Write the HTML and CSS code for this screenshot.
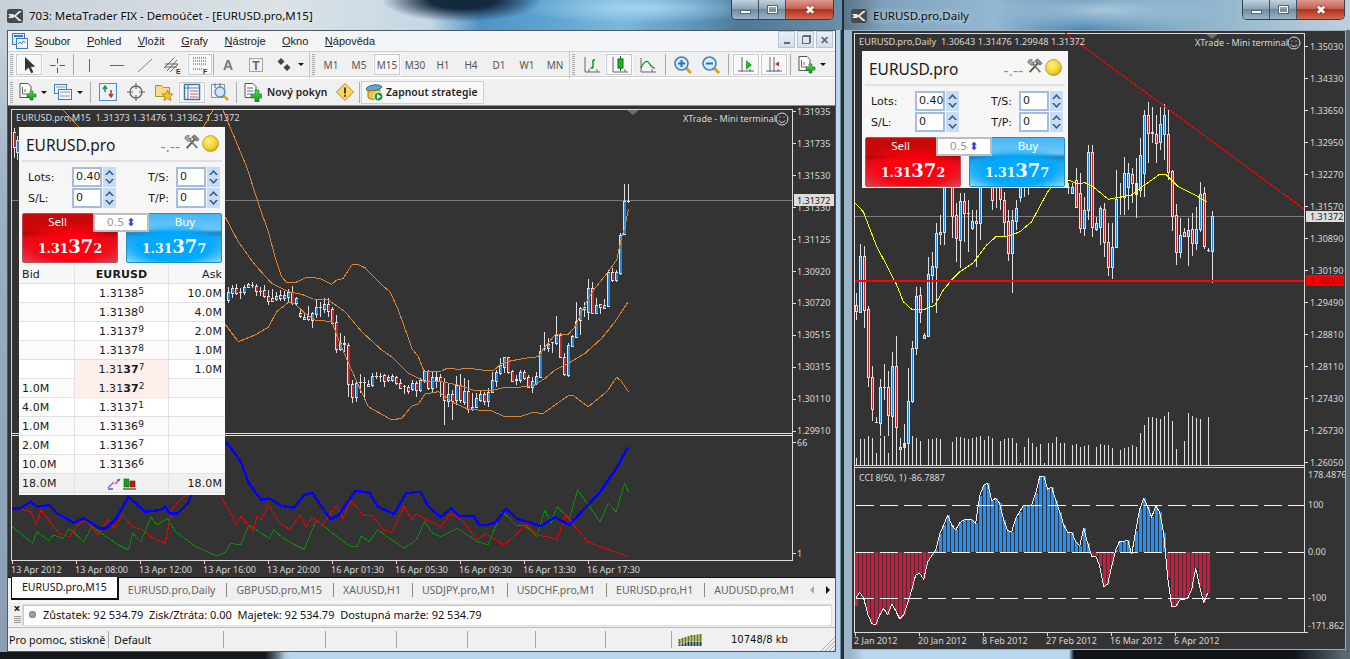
FILE: index.html
```html
<!DOCTYPE html>
<html lang="cs">
<head>
<meta charset="utf-8">
<title>MetaTrader FIX</title>
<link rel="stylesheet" href="styles.css">
</head>
<body>
<svg class="defs" width="0" height="0" aria-hidden="true">
  <defs>
    <linearGradient id="gplus" x1="0" y1="0" x2="0" y2="1"><stop offset="0" stop-color="#5fd35f"/><stop offset="1" stop-color="#0c9a1c"/></linearGradient>
    <radialGradient id="gcoin" cx=".4" cy=".35" r=".7"><stop offset="0" stop-color="#fff27a"/><stop offset=".7" stop-color="#f0cf2c"/><stop offset="1" stop-color="#c79a10"/></radialGradient>
    <symbol id="i-arrow" viewBox="0 0 20 20"><path d="M6 2v14l3.600-3.400 2.600 5.600 2.200-1-2.600-5.400h4.600z" fill="#333"/></symbol>
    <symbol id="i-cross" viewBox="0 0 20 20"><path d="M10.500 3v5.500M10.500 12.500v5.500M3 10.500h5.500M12.500 10.500h5.500" stroke="#555" fill="none"/></symbol>
    <symbol id="i-v" viewBox="0 0 20 20"><path d="M10.500 4v13" stroke="#666"/></symbol>
    <symbol id="i-h" viewBox="0 0 20 20"><path d="M3 10.500h14" stroke="#666"/></symbol>
    <symbol id="i-d" viewBox="0 0 20 20"><path d="M3 17L17 4" stroke="#888"/></symbol>
    <symbol id="i-chan" viewBox="0 0 20 20"><path d="M1 13L11 3M4 16L14 5M7 17L15 9M2 9h13M2 12h12" stroke="#555" fill="none" stroke-width=".9"/><text x="13" y="19" font-size="7" font-weight="700" fill="#333" font-family="Liberation Sans">E</text></symbol>
    <symbol id="i-fib" viewBox="0 0 20 20"><path d="M3 3h13M3 6h13M3 9h13M3 14h10" stroke="#444" stroke-dasharray="1 1" fill="none"/><text x="13" y="19" font-size="7" font-weight="700" fill="#333" font-family="Liberation Sans">F</text></symbol>
    <symbol id="i-tbox" viewBox="0 0 20 20"><rect x="3.500" y="3.500" width="13" height="13" fill="none" stroke="#555" stroke-dasharray="1 1"/><text x="6.300" y="15" font-size="12" font-weight="700" fill="#666" font-family="Liberation Sans">T</text></symbol>
    <symbol id="i-dia" viewBox="0 0 20 20"><path d="M7 3l3.500 3.500L7 10 3.500 6.500zM13 9l3.500 3.500L13 16l-3.500-3.500z" fill="#444"/></symbol>
    <symbol id="i-bar" viewBox="0 0 20 20"><path d="M4 2v15h15M16 14v3M8 14v3" stroke="#667" fill="none"/><path d="M12 5v8M9.500 13H12M12 5h2" stroke="#0a8a1a" fill="none" stroke-width="1.400"/></symbol>
    <symbol id="i-candle" viewBox="0 0 20 20"><path d="M4 2v15h15M16 14v3" stroke="#667" fill="none"/><path d="M11.500 1v15" stroke="#0a6a16"/><rect x="9" y="4" width="5" height="9" fill="#22b02c" stroke="#0a6a16"/></symbol>
    <symbol id="i-line" viewBox="0 0 20 20"><path d="M4 3v14h15M15 14v3" stroke="#667" fill="none"/><path d="M4 13C7 6 10 5 12 8s3 5 6 5" stroke="#0a8a1a" fill="none" stroke-width="1.200"/></symbol>
    <symbol id="i-zin" viewBox="0 0 20 20"><path d="M12 12l6 6" stroke="#d9a422" stroke-width="3"/><circle cx="8.500" cy="8.500" r="6.500" fill="#d8ebfb" stroke="#4a82b8" stroke-width="1.600"/><path d="M5 8.500h7M8.500 5v7" stroke="#2a70b0" stroke-width="2"/></symbol>
    <symbol id="i-zout" viewBox="0 0 20 20"><path d="M12 12l6 6" stroke="#d9a422" stroke-width="3"/><circle cx="8.500" cy="8.500" r="6.500" fill="#d8ebfb" stroke="#4a82b8" stroke-width="1.600"/><path d="M5 8.500h7" stroke="#2a70b0" stroke-width="2"/></symbol>
    <symbol id="i-auto" viewBox="0 0 20 20"><path d="M6 2v15M2 16h16M14 14v3" stroke="#667" fill="none"/><path d="M10 5l6 5-6 5z" fill="#25b030"/></symbol>
    <symbol id="i-shift" viewBox="0 0 20 20"><path d="M6 2v15M2 16h16M14 14v3M10 2v15" stroke="#667" fill="none"/><path d="M11 9l4-2.500v5z" fill="#c03020"/></symbol>
    <symbol id="i-newch" viewBox="0 0 20 20"><path d="M3 1.500h8l3 3v11H3z" fill="#fff" stroke="#555"/><path d="M5.500 5v7h6M8 7v3" stroke="#666" fill="none"/><path d="M10 12h3V9h3v3h3v3h-3v3h-3v-3h-3z" fill="url(#gplus)" stroke="#0c7a18" stroke-width=".6"/></symbol>
    <symbol id="i-prof" viewBox="0 0 20 20"><rect x="1.500" y="2.500" width="12" height="9" fill="#eef5fc" stroke="#4a7ca8"/><rect x="5.500" y="7.500" width="13" height="10" fill="#eef5fc" stroke="#4a7ca8"/><path d="M3 5h9M7 10h10M7 14h10" stroke="#7a9cc0"/></symbol>
    <symbol id="i-mw" viewBox="0 0 20 20"><rect x="1.500" y="1.500" width="17" height="17" fill="#e6f1fb" stroke="#4a90c8"/><path d="M7 10V5M5 7l2-3 2 3" stroke="#1a9a2a" fill="none" stroke-width="1.500"/><path d="M13 8v6M11 12l2 3 2-3" stroke="#d03020" fill="none" stroke-width="1.500"/></symbol>
    <symbol id="i-target" viewBox="0 0 20 20"><circle cx="10" cy="10" r="6" fill="none" stroke="#666" stroke-width="1.400"/><path d="M10 1v6M10 13v6M1 10h6M13 10h6" stroke="#666" stroke-width="1.200"/></symbol>
    <symbol id="i-fold" viewBox="0 0 20 20"><path d="M1.500 3.500h6l2 2h6v9h-14z" fill="#f6dc8a" stroke="#b39030"/><path d="M13.500 8l1.700 3.600 3.800.5-2.800 2.600.8 3.800-3.500-1.900-3.500 1.900.8-3.800L8 12.100l3.800-.5z" fill="#f0c030" stroke="#a07a10" stroke-width=".7"/></symbol>
    <symbol id="i-nav" viewBox="0 0 20 20"><rect x="2.500" y="2.500" width="15" height="15" fill="#fff" stroke="#3a78b8" stroke-width="1.500"/><path d="M2.500 6h15M6 2.500v15" stroke="#3a78b8"/><path d="M8 9h8M8 12h8M8 15h8" stroke="#d05050"/></symbol>
    <symbol id="i-test" viewBox="0 0 20 20"><rect x="1.500" y="2.500" width="13" height="13" fill="#eef3f7" stroke="#8a9aa8"/><path d="M5 1v5M10 1v5" stroke="#667"/><path d="M13 13l5 5" stroke="#d9a422" stroke-width="2.500"/><circle cx="10" cy="10" r="5" fill="#cfe4f5" stroke="#5a8fc0" stroke-width="1.400"/></symbol>
    <symbol id="i-order" viewBox="0 0 20 20"><path d="M3 1.500h8l3 3v11H3z" fill="#fff" stroke="#555"/><path d="M5 6h6M5 9h6M5 12h4" stroke="#667"/><path d="M9 12h4V8h4v4h3v4h-3v4h-4v-4H9z" fill="url(#gplus)" stroke="#0c7a18" stroke-width=".6"/></symbol>
    <symbol id="i-alert" viewBox="0 0 20 20"><path d="M10 1.500L18.500 10 10 18.500 1.500 10z" fill="#f8d860" stroke="#b08a20"/><rect x="9" y="5.500" width="2" height="6" fill="#5a4008"/><rect x="9" y="12.800" width="2" height="2" fill="#5a4008"/></symbol>
    <symbol id="i-strat" viewBox="0 0 20 20"><path d="M2 7c1-4 14-6 16-2-1 3-15 6-16 2z" fill="#5aa8d8" stroke="#2a6a9a"/><path d="M4 9v6c0 3 12 3 12 0V8z" fill="#f0c830" stroke="#9a7a10"/><circle cx="14.500" cy="14.500" r="4.500" fill="#1a9a3a" stroke="#fff"/><path d="M13 12l4 2.500-4 2.500z" fill="#fff"/></symbol>
    <symbol id="i-app" viewBox="0 0 16 16"><rect x=".5" y=".5" width="12" height="11" fill="#dcecfa" stroke="#3a78c0"/><rect x="4.500" y="5.500" width="11" height="10" fill="#eef6fd" stroke="#3a78c0"/><path d="M2 3h9" stroke="#3a78c0" stroke-width="2"/><path d="M6 11l2-2 1.500 2 2-3 2 2" stroke="#3a78c0" fill="none"/></symbol>
    <symbol id="i-logo" viewBox="0 0 16 14"><rect width="16" height="14" rx="2.500" fill="#4a4a4a"/><path d="M1 5h5l2 2-2 2H1l2-2zM15 2l-6 5 6 5h-3L6.500 7 12 2z" fill="#e8e8e8"/></symbol>
    <symbol id="i-tools" viewBox="0 0 18 18"><path d="M3 16L13 5" stroke="#6a5030" stroke-width="2"/><path d="M9 3l3-2 5 5-2 2-2-1-2-1z" fill="#888" stroke="#333" stroke-width=".6"/><path d="M15 16L5 5" stroke="#777" stroke-width="2"/><path d="M1 5c0-3 3-4 5-3L4.500 4 6 5.500 8 4c.5 2-1 5-4 4z" fill="#aaa" stroke="#333" stroke-width=".6"/></symbol>
    <symbol id="i-coin" viewBox="0 0 16 16"><circle cx="8" cy="8" r="7.500" fill="url(#gcoin)" stroke="#b89018" stroke-width=".7"/></symbol>
    <symbol id="i-spin" viewBox="0 0 13 20"><rect width="13" height="20" fill="#c9dcf0"/><path d="M2 8l4.500-5L11 8H9L6.500 5.300 4 8zM2 12l4.500 5L11 12H9l-2.500 2.700L4 12z" fill="#2f5a94"/></symbol>
    <symbol id="i-smile" viewBox="0 0 14 14"><circle cx="7" cy="7" r="6" fill="none" stroke="#ddd"/><path d="M4.500 5h1M8.500 5h1" stroke="#ddd" stroke-width="1.200"/><path d="M3.800 8.500c1.500 2.500 5 2.500 6.400 0" stroke="#ddd" fill="none"/></symbol>
  </defs>
</svg>

<main class="desktop">
  <section class="win win-main">
    <header class="titlebar">
      <svg class="logo"><use href="#i-logo"/></svg>
      <span class="wintitle">703: MetaTrader FIX - Demoúčet - [EURUSD.pro,M15]</span>
      <div class="capbtns">
        <span class="cap cap-min"><i class="g-min"></i></span>
        <span class="cap cap-max"><i class="g-max"></i></span>
        <span class="cap cap-close">✖</span>
      </div>
    </header>
    <div class="client">
      <nav class="menubar">
        <svg class="appicon"><use href="#i-app"/></svg>
        <span class="mi"><u>S</u>oubor</span>
        <span class="mi"><u>P</u>ohled</span>
        <span class="mi"><u>V</u>ložit</span>
        <span class="mi"><u>G</u>rafy</span>
        <span class="mi"><u>N</u>ástroje</span>
        <span class="mi"><u>O</u>kno</span>
        <span class="mi"><u>N</u>ápověda</span>
        <div class="mdi">
          <span class="mdib"><i class="m-min"></i></span>
          <span class="mdib"><i class="m-rest"></i></span>
          <span class="mdib mdix">✕</span>
        </div>
      </nav>

      <div class="toolrow">
        <i class="grip"></i>
        <span class="tb on"><svg class="ic"><use href="#i-arrow"/></svg></span>
        <span class="tb"><svg class="ic"><use href="#i-cross"/></svg></span>
        <i class="sep"></i>
        <span class="tb"><svg class="ic"><use href="#i-v"/></svg></span>
        <span class="tb"><svg class="ic"><use href="#i-h"/></svg></span>
        <span class="tb"><svg class="ic"><use href="#i-d"/></svg></span>
        <span class="tb"><svg class="ic"><use href="#i-chan"/></svg></span>
        <span class="tb tb26 on"><svg class="ic"><use href="#i-fib"/></svg></span>
        <i class="sep sep2"></i>
        <span class="tb tbA">A</span>
        <span class="tb"><svg class="ic"><use href="#i-tbox"/></svg></span>
        <span class="tb tb37"><svg class="ic"><use href="#i-dia"/></svg><i class="drop"></i></span>
        <i class="tend"></i>
        <i class="grip"></i>
        <span class="tb tf">M1</span><span class="tb tf">M5</span><span class="tb tf on">M15</span><span class="tb tf">M30</span><span class="tb tf">H1</span><span class="tb tf">H4</span><span class="tb tf">D1</span><span class="tb tf">W1</span><span class="tb tf">MN</span>
        <i class="tend tend1"></i>
        <i class="grip"></i>
        <span class="tb"><svg class="ic"><use href="#i-bar"/></svg></span>
        <span class="tb on"><svg class="ic"><use href="#i-candle"/></svg></span>
        <span class="tb"><svg class="ic"><use href="#i-line"/></svg></span>
        <i class="sep sep8"></i>
        <span class="tb"><svg class="ic"><use href="#i-zin"/></svg></span>
        <span class="tb"><svg class="ic"><use href="#i-zout"/></svg></span>
        <i class="sep sep7"></i>
        <span class="tb on"><svg class="ic"><use href="#i-auto"/></svg></span>
        <span class="tb on"><svg class="ic"><use href="#i-shift"/></svg></span>
        <i class="sep"></i>
        <span class="tb tb37"><svg class="ic"><use href="#i-newch"/></svg><i class="drop"></i></span>
      </div>

      <div class="toolrow toolrow2">
        <i class="grip"></i>
        <span class="tb tb35"><svg class="ic"><use href="#i-newch"/></svg><i class="drop"></i></span>
        <span class="tb tb37 tbp"><svg class="ic"><use href="#i-prof"/></svg><i class="drop"></i></span>
        <i class="sep sep7"></i>
        <span class="tb"><svg class="ic"><use href="#i-mw"/></svg></span>
        <span class="tb"><svg class="ic"><use href="#i-target"/></svg></span>
        <span class="tb"><svg class="ic"><use href="#i-fold"/></svg></span>
        <span class="tb on"><svg class="ic"><use href="#i-nav"/></svg></span>
        <span class="tb"><svg class="ic"><use href="#i-test"/></svg></span>
        <i class="sep"></i>
        <span class="tb tbtext order"><svg class="ic"><use href="#i-order"/></svg><b>Nový pokyn</b></span>
        <span class="tb tb25"><svg class="ic"><use href="#i-alert"/></svg></span>
        <i class="sep"></i>
        <span class="tb tbtext strat"><svg class="ic"><use href="#i-strat"/></svg><b>Zapnout strategie</b></span>
      </div>

      <div class="chartarea">
        <svg class="chart" viewBox="8 106 827 471" width="827" height="471">
          <defs>
            <clipPath id="clipTop"><rect x="12" y="110" width="780" height="323"/></clipPath>
            <clipPath id="clipSub"><rect x="12" y="436" width="780" height="124"/></clipPath>
          </defs>
          <g class="frame">
            <path d="M11.500 109.500H792.500V560.500H11.500ZM11.500 433.500H792.500M11.500 435.500H792.500"/>
            <path d="M793 111.500h3M793 143.500h3M793 175.500h3M793 207.500h3M793 239.500h3M793 271.500h3M793 303.500h3M793 335.500h3M793 367.500h3M793 399.500h3M793 431.500h3M793 442.500h3M793 553.500h3"/>
            <path d="M12.500 561v3M76.500 561v3M140.500 561v3M204.500 561v3M268.500 561v3M332.500 561v3M396.500 561v3M460.500 561v3M524.500 561v3M588.500 561v3"/>
          </g>
          <path class="curline" d="M12 200.500H792"/>
          <g id="mainChart" clip-path="url(#clipTop)"></g>
          <g id="subChart" clip-path="url(#clipSub)"></g>
          <path class="mark" d="M627 110h12l-6 5z"/>
          <text class="ct ctw" x="16" y="121" xml:space="preserve">EURUSD.pro,M15  1.31373 1.31476 1.31362 1.31372</text>
          <text class="ct" x="683" y="122">XTrade - Mini terminal</text>
          <use href="#i-smile" x="775" y="112" width="14" height="14"/>
          <g class="ct">
            <text x="797" y="114.500">1.31935</text><text x="797" y="146.500">1.31735</text><text x="797" y="178.500">1.31530</text><text x="797" y="210.500">1.31330</text><text x="797" y="242.500">1.31125</text><text x="797" y="274.500">1.30920</text><text x="797" y="305.500">1.30720</text><text x="797" y="337.500">1.30515</text><text x="797" y="369.500">1.30315</text><text x="797" y="401.500">1.30110</text><text x="797" y="433.500">1.29910</text><text x="797" y="445.500">66</text><text x="797" y="556.500">1</text>
            <text x="11" y="573">13 Apr 2012</text><text x="75" y="573">13 Apr 08:00</text><text x="139" y="573">13 Apr 12:00</text><text x="203" y="573">13 Apr 16:00</text><text x="267" y="573">13 Apr 20:00</text><text x="331" y="573">16 Apr 01:30</text><text x="395" y="573">16 Apr 05:30</text><text x="459" y="573">16 Apr 09:30</text><text x="523" y="573">16 Apr 13:30</text><text x="587" y="573">16 Apr 17:30</text>
          </g>
          <rect class="pbox" x="794" y="194" width="40" height="12"/>
          <text class="ctd" x="797" y="203.500">1.31372</text>
        </svg>

        <aside class="term term-main">
          <div class="term-head"><span class="sym">EURUSD.pro</span><span class="spread">-.--</span><svg class="tools"><use href="#i-tools"/></svg><svg class="coin"><use href="#i-coin"/></svg></div>
          <div class="term-form">
            <label>Lots:</label><span class="inp">0.40</span><svg class="spin"><use href="#i-spin"/></svg>
            <label class="r">T/S:</label><span class="inp">0</span><svg class="spin"><use href="#i-spin"/></svg>
            <label>S/L:</label><span class="inp">0</span><svg class="spin"><use href="#i-spin"/></svg>
            <label class="r">T/P:</label><span class="inp">0</span><svg class="spin"><use href="#i-spin"/></svg>
          </div>
          <div class="trade">
            <div class="tbtn sell"><span class="tl">Sell</span><span class="px">1.31<em>37</em>2</span></div>
            <div class="tbtn buy"><span class="tl">Buy</span><span class="px">1.31<em>37</em>7</span></div>
            <div class="size">0.5<i class="updn">⬍</i></div>
          </div>
          <div class="dom">
            <div class="row hd"><span>Bid</span><span class="c"><b>EURUSD</b></span><span class="a">Ask</span></div>
            <div class="row"><span></span><span class="c">1.3138<sup>5</sup></span><span class="a">10.0M</span></div>
            <div class="row alt"><span></span><span class="c">1.3138<sup>0</sup></span><span class="a">4.0M</span></div>
            <div class="row"><span></span><span class="c">1.3137<sup>9</sup></span><span class="a">2.0M</span></div>
            <div class="row alt"><span></span><span class="c">1.3137<sup>8</sup></span><span class="a">1.0M</span></div>
            <div class="row"><span></span><span class="c hot">1.31<b>37</b><sup>7</sup></span><span class="a">1.0M</span></div>
            <div class="row alt"><span>1.0M</span><span class="c hot">1.31<b>37</b><sup>2</sup></span><span class="a"></span></div>
            <div class="row"><span>4.0M</span><span class="c">1.3137<sup>1</sup></span><span class="a"></span></div>
            <div class="row alt"><span>1.0M</span><span class="c">1.3136<sup>9</sup></span><span class="a"></span></div>
            <div class="row"><span>2.0M</span><span class="c">1.3136<sup>7</sup></span><span class="a"></span></div>
            <div class="row alt"><span>10.0M</span><span class="c">1.3136<sup>6</sup></span><span class="a"></span></div>
            <div class="row foot"><span>18.0M</span><span class="c ficons"><svg width="14" height="12" viewBox="0 0 14 12"><path d="M1 10L7 4M8 6l5-5" stroke="#d04aa0" fill="none" stroke-width="1.400"/><path d="M1 11h5M10 2l3 0" stroke="#3a6ad0" stroke-width="1.400"/></svg><svg width="14" height="12" viewBox="0 0 14 12"><rect x="1" y="1" width="5" height="8" fill="#12a022" stroke="#0a6a14" stroke-width=".6"/><rect x="7" y="3" width="5" height="6" fill="#c01818" stroke="#801010" stroke-width=".6"/><path d="M0 11h13" stroke="#555" stroke-width="1.400"/></svg></span><span class="a">18.0M</span></div>
          </div>
        </aside>
      </div>

      <div class="tabs">
        <span class="tab active">EURUSD.pro,M15</span>
        <span class="tab first">EURUSD.pro,Daily</span>
        <span class="tab">GBPUSD.pro,M15</span>
        <span class="tab">XAUUSD,H1</span>
        <span class="tab">USDJPY.pro,M1</span>
        <span class="tab">USDCHF.pro,M1</span>
        <span class="tab">EURUSD.pro,H1</span>
        <span class="tab last">AUDUSD.pro,M1</span>
        <span class="tabnav"><i class="al"></i><i class="ar"></i></span>
      </div>

      <div class="info">
        <div class="infoside"><b>×</b><i></i></div>
        <div class="infofield"><i class="dot"></i><span>Zůstatek: 92 534.79&nbsp; Zisk/Ztráta: 0.00&nbsp; Majetek: 92 534.79&nbsp; Dostupná marže: 92 534.79</span></div>
      </div>

      <footer class="status">
        <span class="cell c1">Pro pomoc, stiskně</span>
        <span class="cell c2">Default</span>
        <span class="cell c3"></span>
        <span class="cell c4"></span>
        <span class="cell c4"></span>
        <span class="cell c5"></span>
        <span class="cell c6"></span>
        <span class="cell c9"></span>
        <span class="cell c7"><svg width="24" height="13" viewBox="0 0 24 13"><path d="M1.500 11V6M4.500 10V5M7.500 9V4M10.500 8V3M13.500 8V2M16.500 8V2M19.500 8V1.500M22.500 8V1" stroke="#6a7a08" stroke-width="2" fill="none"/><path d="M1.500 13V11.500M4.500 13V10.500M7.500 13V9.500M10.500 13V8.500M13.500 13V8.500M16.500 13V8.500M19.500 13V8.500M22.500 13V8.500" stroke="#103a58" stroke-width="2" fill="none"/></svg></span>
        <span class="cell c8">10748/8 kb</span>
        <svg class="sgrip" width="15" height="15" viewBox="0 0 15 15"><path d="M15 1L1 15M15 5L5 15M15 9L9 15M15 13L13 15" stroke="#aaa" fill="none"/></svg>
      </footer>
    </div>
  </section>

  <section class="win win-daily">
    <header class="titlebar">
      <svg class="logo"><use href="#i-logo"/></svg>
      <span class="wintitle">EURUSD.pro,Daily</span>
      <div class="capbtns">
        <span class="cap cap-min"><i class="g-min"></i></span>
        <span class="cap cap-max"><i class="g-max"></i></span>
        <span class="cap cap-close">✖</span>
      </div>
    </header>
    <div class="client client-dark">
      <svg class="chart" viewBox="852 31 493 618" width="493" height="618">
        <defs>
          <clipPath id="clipD"><rect x="855" y="34" width="449" height="431"/></clipPath>
          <clipPath id="clipC"><rect x="855" y="468" width="449" height="164"/></clipPath>
        </defs>
        <g class="frame">
          <path d="M854.500 33.500H1304.500V632.500H854.500ZM854.500 465.500H1304.500M854.500 467.500H1304.500"/>
          <path d="M1305 46.500h3M1305 78.500h3M1305 110.500h3M1305 142.500h3M1305 174.500h3M1305 206.500h3M1305 238.500h3M1305 270.500h3M1305 302.500h3M1305 334.500h3M1305 366.500h3M1305 398.500h3M1305 430.500h3M1305 462.500h3M1305 632.500h3"/>
          <path d="M855.500 633v3M919.500 633v3M983.500 633v3M1047.500 633v3M1111.500 633v3M1175.500 633v3"/>
        </g>
        <path class="curline" d="M855 216.500H1304"/>
        <g id="dayChart" clip-path="url(#clipD)"></g>
        <path class="trend" d="M1065 33L1304 209"/>
        <path class="level" d="M855 280.500H1304"/>
        <g id="cciChart" clip-path="url(#clipC)"></g>
        <path class="mark" d="M1206 34h12l-6 5z"/>
        <text class="ct ctw" x="859" y="45" xml:space="preserve">EURUSD.pro,Daily  1.30643 1.31476 1.29948 1.31372</text>
        <text class="ct" x="1195" y="46">XTrade - Mini terminal</text>
        <use href="#i-smile" x="1287" y="36" width="14" height="14"/>
        <text class="ct" x="859" y="481">CCI 8(50, 1) -86.7887</text>
        <g class="ct">
          <text x="1310" y="50">1.35030</text><text x="1310" y="82">1.34330</text><text x="1310" y="114">1.33650</text><text x="1310" y="146">1.32950</text><text x="1310" y="178">1.32270</text><text x="1310" y="210">1.31570</text><text x="1310" y="242">1.30890</text><text x="1310" y="274">1.30190</text><text x="1310" y="306">1.29490</text><text x="1310" y="338">1.28810</text><text x="1310" y="370">1.28110</text><text x="1310" y="402">1.27430</text><text x="1310" y="434">1.26730</text><text x="1310" y="466">1.26050</text>
          <text x="1308" y="478">178.4876</text><text x="1308" y="508">100</text><text x="1308" y="555">0.00</text><text x="1308" y="601">-100</text><text x="1308" y="629">-171.862</text>
          <text x="854" y="644">2 Jan 2012</text><text x="918" y="644">20 Jan 2012</text><text x="982" y="644">8 Feb 2012</text><text x="1046" y="644">27 Feb 2012</text><text x="1110" y="644">16 Mar 2012</text><text x="1174" y="644">6 Apr 2012</text>
        </g>
        <rect class="pbox" x="1306" y="211" width="38" height="11"/>
        <text class="ctd" x="1310" y="219.500">1.31372</text>
        <rect class="rbox" x="1306" y="275" width="38" height="11"/>
        <text class="ctr" x="1310" y="283.500">1.30000</text>
      </svg>

      <aside class="term term-daily">
        <div class="term-head"><span class="sym">EURUSD.pro</span><span class="spread">-.--</span><svg class="tools"><use href="#i-tools"/></svg><svg class="coin"><use href="#i-coin"/></svg></div>
        <div class="term-form">
          <label>Lots:</label><span class="inp">0.40</span><svg class="spin"><use href="#i-spin"/></svg>
          <label class="r">T/S:</label><span class="inp">0</span><svg class="spin"><use href="#i-spin"/></svg>
          <label>S/L:</label><span class="inp">0</span><svg class="spin"><use href="#i-spin"/></svg>
          <label class="r">T/P:</label><span class="inp">0</span><svg class="spin"><use href="#i-spin"/></svg>
        </div>
        <div class="trade">
          <div class="tbtn sell"><span class="tl">Sell</span><span class="px">1.31<em>37</em>2</span></div>
          <div class="tbtn buy"><span class="tl">Buy</span><span class="px">1.31<em>37</em>7</span></div>
          <div class="size">0.5<i class="updn">⬍</i></div>
        </div>
      </aside>
    </div>
  </section>
</main>
<script src="chart.js"></script>
</body>
</html>
```

FILE: styles.css
```css
* { box-sizing: border-box; }
html, body { margin: 0; height: 100%; overflow: hidden; }
body { background: #1c2c3c; font-family: "Noto Sans", "Liberation Sans", sans-serif; color: #111; }
.defs { position: absolute; }
.desktop { position: relative; width: 1350px; height: 659px; overflow: hidden; }

/* windows on the desktop */
.win { position: absolute; top: 0; height: 659px; display: flex; flex-direction: column; }
.win-main {
  left: 0; width: 843px;
  background:
    linear-gradient(90deg, #161a1e 0 265px, transparent 285px) 0 100% / 100% 7px no-repeat,
    linear-gradient(90deg, transparent 0 270px, #b8d6ee 290px 840px, #26343f 841px),
    linear-gradient(#d0d8de 0, #9ab0c4 30%, #8a9eb2 100%);
  border-right: 1px solid #20303c;
}
.win-main .titlebar {
  background:
    radial-gradient(ellipse 80px 22px at 462px 0, #14283e 0 40%, transparent 100%),
    radial-gradient(ellipse 120px 16px at 640px 8px, #a5d4ee 0, transparent 100%),
    linear-gradient(90deg, #c7d0d6 0, #dbe2e6 280px, #c3d7e5 430px, #4f93c6 480px, #62a6d4 560px, #79b8dc 620px, #5b93b8 700px, #4c7a98 740px, #6b8ea8 843px);
}
.win-daily {
  left: 844px; width: 506px;
  background:
    linear-gradient(90deg, #9cb4c8 0 6px, #b8d6ee 20px 225px, #101418 230px 450px, #5a6670 500px);
}
.win-daily .titlebar {
  background:
    radial-gradient(ellipse 120px 20px at 260px 10px, #a8c8da 0, transparent 100%),
    linear-gradient(90deg, #5a7488 0, #7ea2bc 40px, #93b8d2 150px, #4f87b2 240px, #84aec8 330px, #bccfdc 500px);
}
.titlebar { height: 30px; flex: none; position: relative; display: flex; align-items: flex-start; }
.logo { width: 16px; height: 14px; margin: 9px 6px 0 7px; flex: none; }
.wintitle { font-size: 11.500px; line-height: 16px; margin-top: 8px; color: #0c0c0c; white-space: nowrap; text-shadow: 0 0 6px #fff; }
.capbtns { position: absolute; top: 0; right: 8px; display: flex; height: 20px; border: 1px solid #30404e; border-top: 0; border-radius: 0 0 5px 5px; overflow: hidden; }
.win-daily .capbtns { right: 5px; }
.cap { display: flex; align-items: center; justify-content: center; height: 19px; width: 27px; background: linear-gradient(#c2d2de, #8ea6b8 45%, #6f8a9e 50%, #9cb4c6); border-right: 1px solid #405060; }
.cap-close { width: 47px; border-right: 0; background: linear-gradient(#dc9a90, #c8604f 45%, #b63020 50%, #cf6a50); color: #fff; font-size: 12px; line-height: 1; text-shadow: 0 0 2px #400; }
.g-min { width: 11px; height: 4px; background: #fff; border: 1px solid #56697a; margin-top: 5px; }
.g-max { width: 11px; height: 9px; border: 2px solid #fff; outline: 1px solid #56697a; outline-offset: -1px; }

.client { width: 829px; margin-left: 7px; height: 622px; background: #f0f0f0; border: 1px solid #4d5a64; display: flex; flex-direction: column; }
.client-dark { position: relative; width: 495px; height: 620px; background: #333; border-color: #9fb2c0; }

/* menu */
.menubar { height: 21px; flex: none; display: flex; align-items: center; background: #f4f5f6; position: relative; border-bottom: 1px solid #cfcfcf; padding-left: 4px; }
.appicon { width: 16px; height: 16px; margin-right: 7px; flex: none; }
.mi { font: 11px/16px "Liberation Sans", sans-serif; margin-right: 16.500px; color: #222; }
.mdi { position: absolute; right: 2px; top: 0; display: flex; gap: 2px; }
.mdib { width: 17px; height: 17px; display: flex; align-items: center; justify-content: center; background: linear-gradient(#e6eef6, #d3e0ec); border: 1px solid #b5c5d4; color: #667; font-size: 11px; font-weight: 700; }
.m-min { width: 6px; height: 2px; background: #667; margin-top: 7px; }
.m-rest { width: 8px; height: 8px; border: 1px solid #667; box-shadow: 1px -1px 0 #667; }

/* toolbars */
.toolrow { height: 27px; flex: none; display: flex; align-items: center; border-bottom: 2px solid #fff; box-shadow: inset 0 -1px 0 #d0d0d0; background: #f0f0f0; }
.toolrow2 { border-bottom: 1px solid #8c8c8c; box-shadow: none; }
.grip { width: 7px; height: 21px; flex: none; background: repeating-linear-gradient(#aaa 0 1px, transparent 1px 2px) 2px 0 / 3px 100% no-repeat; }
.sep { width: 4px; height: 21px; flex: none; background: linear-gradient(#aaa, #aaa) center / 1px 100% no-repeat; }
.sep2 { width: 1px; }
.sep7 { width: 7px; }
.sep8 { width: 8px; }
.tend { width: 3px; height: 26px; flex: none; border-right: 1px solid #c4c4c4; }
.tend1 { width: 1px; }
.tb { width: 28px; height: 23px; flex: none; display: flex; align-items: center; justify-content: center; position: relative; }
.tb26 { width: 26px; }
.tb25 { width: 25px; }
.tb35 { width: 35px; justify-content: flex-start; padding-left: 2px; }
.tb37 { width: 37px; justify-content: flex-start; padding-left: 4px; }
.tbp { padding-left: 3px; }
.tb.on { background: #f8f8f8; outline: 1px solid #c8c8c8; outline-offset: -2px; box-shadow: inset 0 0 0 3px #fbfbfb; }
.ic { width: 20px; height: 20px; flex: none; }
.tbA { font: 700 14px "Liberation Sans", sans-serif; color: #777; }
.tf { font: 10px "Noto Sans", sans-serif; color: #555; }
.drop { width: 0; height: 0; margin-left: 4px; border: 3px solid transparent; border-top: 3px solid #111; border-bottom: 0; }
.tbtext { width: auto; justify-content: flex-start; }
.tbtext b { font: 600 10.300px "Noto Sans", sans-serif; white-space: nowrap; color: #222; letter-spacing: .1px; }
.order { width: 94px; padding-left: 4px; gap: 5px; }
.strat { width: 123px; padding-left: 3px; gap: 2px; outline: 1px solid #cfcfcf; outline-offset: -1px; background: #f8f8f8; }

/* chart area */
.chartarea { position: relative; height: 471px; flex: none; background: #333; }
.chart { display: block; }
.frame path { fill: none; stroke: #dcdcdc; stroke-width: 1; shape-rendering: crispEdges; }
.curline { stroke: #7c7c7c; fill: none; shape-rendering: crispEdges; }
.trend { stroke: #f00; fill: none; shape-rendering: crispEdges; }
.level { stroke: #f00; stroke-width: 2; fill: none; shape-rendering: crispEdges; }
.mark { fill: #6c6c6c; }
.ct, .ct text { font: 9px "Noto Sans", sans-serif; fill: #d8d8d8; }
.ctw { font-size: 9.250px; }
.ctd { font: 9px "Noto Sans", sans-serif; fill: #222; }
.ctr { font: 9px "Noto Sans", sans-serif; fill: #a00000; }
.pbox { fill: #dedede; }
.rbox { fill: #f00; }

/* mini terminal */
.term { position: absolute; width: 206px; background: #f6f6f6; font: 11px "DejaVu Sans", sans-serif; color: #1a1a1a; }
.term-main { left: 11px; top: 21px; height: 368px; }
.term-daily { left: 10px; top: 20px; height: 137px; }
.term-head { height: 35px; display: flex; align-items: center; margin: 0 3px; padding: 3px 3px 0 4px; border-bottom: 2px solid #e0e0e0; position: relative; }
.sym { font: 15.500px "Noto Sans", sans-serif; }
.spread { margin-left: auto; margin-right: 4px; color: #888; font-size: 14px; padding-top: 3px; }
.tools { width: 16px; height: 16px; margin-bottom: 6px; }
.coin { width: 17px; height: 17px; margin: 0 0 4px 2px; }
.term-form { display: grid; grid-template-columns: 44px 30px 14px 60px 30px 14px; grid-auto-rows: 21px; padding: 4px 0 0 9px; align-items: center; }
.term-form label { padding-top: 1px; }
.term-form .r { text-align: right; padding-right: 7px; }
.inp { height: 20px; width: 30px; background: #fff; border: 2px solid #a3bde0; font-size: 11px; line-height: 16px; padding-left: 2px; }
.spin { width: 13px; height: 20px; margin-left: 1px; }
.trade { position: relative; display: flex; gap: 8px; margin: 5px 3px 0; height: 50px; }
.tbtn { width: 96px; display: flex; flex-direction: column; align-items: center; color: #fff; border-radius: 2px; overflow: hidden; }
.tl { font: 11.500px "Noto Sans", sans-serif; height: 20px; line-height: 15px; }
.sell .tl { padding-right: 25px; }
.buy .tl { padding-left: 22px; }
.sell { border: 1px solid #b85058; background: radial-gradient(ellipse 60px 26px at 50% 70%, #ff0010 0 50%, transparent 100%), linear-gradient(#c40808 0, #cc0808 34%, #9c0808 40%, #d01018 50%, #d65060 100%); }
.buy { border: 1px solid #2090c8; background: radial-gradient(ellipse 60px 24px at 50% 70%, #00a8ff 0 55%, transparent 100%), linear-gradient(#46b6f6 0, #6cc8f8 32%, #1880c0 40%, #28a4e8 50%, #a0e0fa 100%); }
.px { font: 700 12.500px "DejaVu Serif", serif; line-height: 26px; margin-top: 2px; white-space: nowrap; }
.px em { font-style: normal; font-size: 18px; }
.size { position: absolute; left: 71px; top: 0; width: 56px; height: 19px; background: #fff; border: 2px solid #bdbdbd; color: #999; font-size: 11px; line-height: 15px; text-align: center; }
.updn { font-style: normal; color: #3c3cd8; font-size: 11px; margin-left: 2px; }
.dom { margin-top: 2px; }
.row { display: grid; grid-template-columns: 56px 94px 56px; height: 19px; line-height: 20px; border-bottom: 1px solid #e0e0e0; background: #fff; }
.row.alt { background: #fbfbfb; }
.row.hd { background: #f7f7f7; }
.row span { padding: 0 3px; border-right: 1px solid #e2e2e2; letter-spacing: .1px; white-space: nowrap; }
.row .a { text-align: right; border-right: 0; }
.row .c { text-align: center; }
.row .hot { background: #fdefeb; }
.row.foot { background: #f0f0f0; }
.row sup { font-size: 9px; line-height: 0; vertical-align: 3px; }
.ficons { display: flex; align-items: center; justify-content: center; gap: 2px; }

/* tabs and strips */
.tabs { height: 24px; flex: none; display: flex; align-items: center; background: #f0f0f0; border-top: 1px solid #111; position: relative; padding-left: 3px; font-size: 10.500px; color: #666; white-space: nowrap; }
.tab { padding: 0 11px 0 9px; border-right: 1px solid #8a8a8a; line-height: 14px; }
.tab.active { color: #111; background: #fff; border: 1px solid #111; border-top: 0; border-right-width: 2px; border-bottom-width: 2px; height: 23px; line-height: 20px; margin-top: -1px; padding: 0 10px; align-self: flex-start; }
.tab.last { border-right: 0; }
.tabnav { position: absolute; right: 5px; top: 8px; display: flex; gap: 12px; }
.al { width: 0; height: 0; border: 4px solid transparent; border-right: 4px solid #aaa; border-left: 0; }
.ar { width: 0; height: 0; border: 4px solid transparent; border-left: 4px solid #111; border-right: 0; }
.info { height: 26px; flex: none; display: flex; align-items: center; border-top: 1px solid #fff; }
.infoside { width: 14px; display: flex; flex-direction: column; align-items: center; padding-left: 4px; line-height: 8px; font-size: 12px; }
.infoside i { width: 7px; height: 8px; margin-top: 3px; background: repeating-linear-gradient(#999 0 1px, transparent 1px 2px); }
.infofield { flex: 1; height: 22px; margin-right: 3px; background: #fff; border: 1px solid #dcdcdc; box-shadow: inset 1px 1px 0 #c8c8c8; display: flex; align-items: center; font-size: 11px; white-space: nowrap; padding-left: 6px; gap: 7px; }
.dot { width: 7px; height: 7px; border-radius: 50%; background: #a0a0a0; box-shadow: inset 0 0 0 1px #888; flex: none; }
.status { height: 24px; flex: none; display: flex; align-items: center; position: relative; border-top: 1px solid #bbb; font-size: 10.800px; background: #f0f0f0; }
.cell { height: 17px; line-height: 17px; border-right: 1px solid #a8a8a8; flex: none; white-space: nowrap; padding-left: 1px; }
.c1 { width: 101px; }
.c2 { width: 115px; padding-left: 5px; }
.c3 { width: 102px; }
.c4 { width: 71px; }
.c5 { width: 68px; }
.c6 { width: 70px; }
.c9 { width: 66px; }
.c7 { width: 59px; border-right: 0; padding: 0; }
.c7 svg { display: block; margin: 2px 0 0 6px; }
.c8 { border-right: 0; width: 70px; padding-left: 0; font: 10px/17px "DejaVu Sans", sans-serif; }
.sgrip { position: absolute; right: 0; bottom: 0; }
```

FILE: chart.js
```js
(function () {
  var NS = 'http://www.w3.org/2000/svg';
  function el(parent, name, attrs) {
    var e = document.createElementNS(NS, name);
    for (var k in attrs) e.setAttribute(k, attrs[k]);
    parent.appendChild(e);
    return e;
  }
  var BLUE = '#1e88dc', RED = '#b8282c', LIGHT = '#e0e0e0';
  function candle(g, x, h, t, b, l, c, inner) {
    x = Math.round(x); h = Math.round(h); t = Math.round(t); b = Math.round(b); l = Math.round(l);
    el(g, 'rect', { x: x, y: h, width: 1, height: Math.max(1, l - h), fill: LIGHT, 'shape-rendering': 'crispEdges' });
    if (b - t < 2 || c === 'd') {
      el(g, 'rect', { x: x - 1, y: t, width: 3, height: Math.max(1, b - t), fill: LIGHT, 'shape-rendering': 'crispEdges' });
      return;
    }
    el(g, 'rect', { x: x - 1, y: t, width: 3, height: b - t + 1, fill: LIGHT, 'shape-rendering': 'crispEdges' });
    el(g, 'rect', { x: x, y: t + 1, width: inner || 2, height: b - t - 1, fill: c === 'b' ? BLUE : RED, 'shape-rendering': 'crispEdges' });
  }
  function line(g, pts, mapX, mapY, color, w) {
    var s = [];
    for (var i = 0; i < pts.length; i += 2) s.push(mapX(pts[i]).toFixed(1) + ',' + mapY(pts[i + 1]).toFixed(1));
    el(g, 'polyline', { points: s.join(' '), fill: 'none', stroke: color, 'stroke-width': w, 'stroke-linejoin': 'round', 'shape-rendering': 'crispEdges' });
  }

  /* ---------- M15 window ---------- */
  var main = document.getElementById('mainChart');
  var mx = function (v) { return 225 + v / 3; }, my = function (v) { return 170 + v / 3; };
  var M = ('350 365 390 400 b,345 355 370 385 b,342 355 370 375 r,355 365 368 388 d,345 350 365 375 b,338 343 350 355 b,335 345 348 355 b,343 348 362 378 r,352 362 364 378 d,345 360 378 385 r,360 377 392 405 r,358 385 392 395 r,365 378 388 392 b,360 374 384 392 r,362 376 383 392 b,358 365 380 395 b,348 365 398 405 r,380 385 400 405 b,' +
    '420 430 437 445 r,430 440 447 450 b,408 438 448 452 r,425 430 450 475 b,390 412 433 445 b,395 410 414 440 b,385 402 416 430 b,385 402 422 440 r,410 418 458 462 r,435 455 536 548 r,490 520 538 542 b,498 520 525 545 d,520 525 642 682 r,630 642 680 698 r,630 640 680 695 b,612 637 638 670 d,620 637 640 685 d,630 643 648 652 r,610 618 645 650 b,605 618 620 628 d,610 617 620 635 d,612 616 632 650 r,615 620 630 635 b,612 618 630 635 b,618 620 640 645 r,628 640 653 658 r,645 648 650 672 d,645 650 662 672 r,630 640 658 662 b,632 640 660 680 r,625 630 660 665 b,' +
    '600 603 630 640 b,600 603 655 660 r,605 620 655 670 b,607 620 632 655 d,612 620 632 680 r,625 635 690 765 r,640 672 692 710 b,660 672 692 750 r,618 645 690 705 b,612 645 690 700 r,625 664 695 705 b,630 664 717 728 r,670 710 717 722 b,670 685 710 715 b,660 672 690 695 b,665 672 692 705 r,655 665 692 712 b,605 630 665 670 b,600 605 632 650 b,565 585 608 615 b,560 562 590 610 b,560 562 605 612 r,600 603 632 635 r,615 628 632 645 d,600 606 630 640 b,600 606 625 630 r,615 620 650 655 r,620 632 650 668 b,605 618 638 645 b,525 542 620 622 b,485 535 538 542 d,505 522 535 545 b,515 515 520 550 d,438 495 518 525 b,490 495 560 565 r,550 560 612 618 r,520 525 615 620 b,495 498 527 530 b,395 452 500 502 b,410 415 450 495 b,395 410 418 440 b,328 355 425 450 b,335 355 428 430 r,385 405 428 430 b,402 403 412 432 r,388 405 413 418 b,300 306 408 410 b,295 306 330 335 r,300 306 330 335 b,190 195 308 315 b,42 92 193 195 b,42 92 93 98 d').split(',');
  M.forEach(function (s, i) {
    var p = s.split(' ');
    candle(main, mx(10 + i * 12), my(+p[0]), my(+p[1]), my(+p[2]), my(+p[3]), p[4]);
  });
  candle(main, 14, 128, 132, 147, 158, 'r');
  candle(main, 17, 136, 140, 152, 160, 'b');

  var ID = function (v) { return v; };
  var OR = '#dd8530';
  line(main, [68,0,100,100,130,185,150,260,170,320,185,338,210,338,245,322,285,325,320,343,335,330,355,325,380,285,400,284,420,293,470,345,495,365,520,420,545,490,560,535,580,560,598,605,650,603,665,595,700,598,730,595,770,600,805,602,830,580,860,572,900,565,940,560,960,530,990,495,1030,493,1050,470,1070,425,1090,385,1110,355,1150,305,1175,270,1190,200,1200,170,1210,118], mx, my, OR, 1);
  line(main, [0,140,40,215,90,285,140,340,190,365,230,373,265,387,310,390,360,425,410,485,470,540,500,560,550,610,600,635,650,635,700,645,750,662,800,662,840,652,880,652,925,647,960,625,990,600,1030,580,1080,550,1130,505,1170,455,1210,395], mx, my, OR, 1);
  line(main, [0,462,40,515,90,495,130,472,155,425,190,397,210,402,240,430,270,450,320,455,345,520,375,590,430,710,500,750,530,745,560,708,580,702,600,672,640,665,680,695,730,718,800,723,840,740,885,740,920,728,955,730,1030,677,1045,677,1090,710,1145,665,1175,622,1190,635,1210,665], mx, my, OR, 1);
  line(main, [223,110,248,170], ID, ID, OR, 1);
  line(main, [63,110,80,128], ID, ID, OR, 1);
  line(main, [213,110,203,128], ID, ID, OR, 1);

  var sub = document.getElementById('subChart');
  var sx = function (v) { return v / 2.45; }, sy = function (v) { return 430 + v / 3; };
  line(sub, [30,290,80,340,90,305,120,332,130,315,155,325,170,295,205,335,225,290,290,345,315,360,325,310,345,335,370,262,385,285,410,265,430,305,480,350,530,377,550,370,565,340,590,345,610,285,640,310,660,325,670,300,700,330,745,358,775,270,815,310,860,350,875,350,885,318,905,335,925,300,990,355,1020,330,1040,275,1060,310,1080,320,1120,295,1170,335,1195,345,1230,245,1265,285,1285,285,1315,320,1335,240,1350,280,1365,230,1395,265,1415,180,1470,275,1490,220,1510,245,1530,160,1540,185], sx, sy, '#0a8a0a', 1);
  line(sub, [30,230,75,245,90,285,100,240,145,310,170,320,195,280,210,270,240,315,265,268,280,295,300,255,325,290,350,300,375,325,405,340,420,240,445,205,470,190,540,195,580,285,590,258,620,305,630,258,640,270,658,225,685,280,710,298,735,255,750,290,765,262,790,285,825,225,840,265,860,212,890,255,910,255,940,300,960,308,990,228,1010,270,1020,250,1045,270,1080,290,1105,250,1135,275,1170,330,1190,310,1235,345,1290,285,1315,315,1340,320,1365,328,1385,255,1440,335,1470,350,1540,380], sx, sy, '#f00000', 1);
  line(sub, [30,235,50,235,75,215,90,230,120,225,140,250,180,278,205,265,245,295,260,295,285,265,315,200,355,245,395,240,405,230,415,250,435,250,460,220,470,195,490,110,550,30,575,70,590,95,610,160,640,210,660,205,690,228,720,233,745,195,765,188,785,225,810,268,830,255,870,183,905,188,925,230,965,252,995,190,1030,185,1050,230,1080,262,1105,235,1125,258,1160,258,1175,285,1195,285,1215,277,1240,236,1265,265,1325,288,1360,262,1395,285,1440,225,1470,187,1490,150,1510,115,1538,52], sx, sy, '#0000ff', 2.4);

  /* ---------- Daily window ---------- */
  var day = document.getElementById('dayChart');
  var dx = function (v) { return 845 + v / 3; }, dy = function (v) { return 190 + v / 3; };
  var tops = [805,747,747,737,745,790,745,738,790,730,745,745,745,735,737,745,753,0,748,748,743,746,0,0,757,740,740,745,747,745,742,738,750,737,745,0,752,747,745,745,760,820,772,745,758,772,763,820,760,760,742,760,760,0,765,762,770,768,766,0,770,763,766,765,775,0,780,775,772,765,770,730,705,682,680,685,688,678,667,693,778,0,753,670,678,685,687,0,682];
  tops.forEach(function (t, i) {
    if (t) el(day, 'rect', { x: Math.round(dx(32 + i * 12)), y: Math.round(dy(t)), width: 1, height: 465 - Math.round(dy(t)), fill: LIGHT, 'shape-rendering': 'crispEdges' });
  });
  var D = ('310 345 362 390 r,162 198 365 368 b,168 198 360 415 r,348 358 562 592 r,528 562 658 692 r,682 696 698 700 d,568 592 698 738 b,522 590 592 630 d,542 590 676 738 r,486 528 678 738 b,438 528 712 770 r,770 772 778 782 b,702 758 775 778 d,535 632 758 760 b,452 475 632 640 b,290 318 475 495 b,290 316 365 400 r,428 435 445 446 b,200 252 438 440 b,185 228 254 340 b,100 130 230 368 b,75 125 133 165 b,-60 -30 125 165 b,-,-60 -10 78 145 r,40 75 145 215 r,10 33 150 235 b,10 33 70 155 r,30 70 71 185 d,60 93 115 120 b,60 93 100 232 r,-40 -20 100 150 b,-,-,-40 -20 30 60 r,-20 -10 -8 55 d,-40 -20 28 60 r,5 30 95 140 r,60 93 190 212 r,60 90 190 308 b,30 55 92 120 b,-30 -10 22 35 b,-20 -10 -8 20 d,-20 -10 -8 15 d,-,-,-,-,-,-,-,-,-,-20 -10 -8 12 d,-20 -10 8 12 b,-65 -30 50 50 r,-50 10 115 130 r,20 60 115 138 b,-135 -115 60 90 b,-135 -115 112 140 r,80 100 118 122 b,48 55 110 165 b,40 58 157 200 r,100 157 230 258 r,100 172 230 268 b,-60 28 172 175 b,-20 22 23 75 d,-98 -52 20 75 b,-80 -52 -10 60 b,-65 -48 -22 40 r,-95 -22 15 85 d,-155 -105 0 20 b,-240 -225 -50 20 b,-265 -225 -170 -80 r,-248 -173 -168 -140 d,-225 -167 -142 -80 r,-250 -198 -143 -120 b,-258 -225 -167 -90 b,-240 -167 -55 -30 r,-60 -58 78 122 r,42 75 185 225 r,85 135 185 205 b,115 127 137 140 r,85 120 138 228 b,68 117 158 198 r,50 117 158 180 b,-25 13 118 125 b,-10 10 168 178 r,175 180 182 185 d,62 78 182 278 b').split(',');
  D.forEach(function (s, i) {
    if (s === '-') return;
    var p = s.split(' ');
    candle(day, dx(32 + i * 12), dy(+p[0]), dy(+p[1]), dy(+p[2]), dy(+p[3]), p[4], 1);
  });
  line(day, [30,38,55,65,95,170,130,235,155,285,175,335,200,358,235,360,270,345,295,300,320,270,345,245,385,218,425,165,455,138,490,138,525,125,560,95,600,20,612,0,640,-25,670,-30,700,-18,720,-22,750,-5,790,28,830,20,860,15,885,-5,920,-30,945,-48,965,-45,1000,-10,1050,15,1085,35], dx, dy, '#ffff00', 1);

  /* ---------- CCI panel ---------- */
  var cci = document.getElementById('cciChart');
  var cy = function (v) { return 460 + v / 3; };
  var C = [437,398,415,462,490,495,465,445,465,432,452,477,465,430,390,345,340,358,305,287,270,222,195,165,195,210,188,180,177,180,190,108,75,70,122,115,130,180,212,215,175,155,135,135,135,100,50,48,88,82,120,155,195,217,216,245,258,205,250,290,288,318,380,372,318,270,243,245,240,282,213,148,115,140,172,138,156,220,352,440,440,420,418,415,388,325,380,428,398];
  var base = 552;
  C.forEach(function (v, i) {
    var y = Math.round(cy(v)), x = Math.round(dx(32 + i * 12)) - 1;
    var up = y < base;
    el(cci, 'rect', { x: x, y: up ? y : base, width: 3, height: Math.abs(y - base), fill: up ? '#1e90ff' : '#dc143c', 'shape-rendering': 'crispEdges' });
  });
  [505, 552, 598].forEach(function (y) {
    el(cci, 'path', { d: 'M856 ' + (y + .5) + 'H1304', stroke: '#f4f4f4', fill: 'none', 'stroke-dasharray': '18 6', 'shape-rendering': 'crispEdges' });
  });
  var pts = [];
  C.forEach(function (v, i) { pts.push(32 + i * 12, v); });
  pts[1] = 415; pts[3] = 397;
  line(cci, pts, dx, cy, '#f4f4f4', 1);
})();
```
